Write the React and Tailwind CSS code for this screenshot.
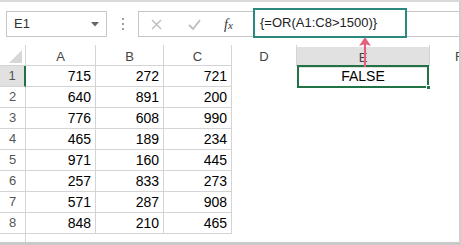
import React from "react";

const data = [
  [715, 272, 721],
  [640, 891, 200],
  [776, 608, 990],
  [465, 189, 234],
  [971, 160, 445],
  [257, 833, 273],
  [571, 287, 908],
  [848, 210, 465],
];

const font = { fontFamily: '"Liberation Sans", Arial, sans-serif' };

function HeaderRow() {
  return (
    <div className="flex h-[21px] shrink-0 text-[13px] text-[#444]">
      <div className="w-[26px] shrink-0 border-r border-b border-[#d4d4d4] flex items-end justify-end pr-[3px] pb-[2px]">
        <svg width="13" height="13" viewBox="0 0 13 13">
          <polygon points="13,0 13,13 0,13" fill="#d7d7d7" />
        </svg>
      </div>
      <div className="w-[70px] shrink-0 border-r border-b border-[#d4d4d4] flex items-center justify-center pt-[3px]">A</div>
      <div className="w-[68px] shrink-0 border-r border-b border-[#d4d4d4] flex items-center justify-center pt-[3px]">B</div>
      <div className="w-[68px] shrink-0 border-r border-b border-[#d4d4d4] flex items-center justify-center pt-[3px]">C</div>
      <div className="w-[65px] shrink-0 border-r border-[#d4d4d4] flex items-center justify-center pt-[3px]">D</div>
      <div className="w-[132px] shrink-0 flex flex-col pt-[2px]">
        <div className="flex-1 bg-[#e1e1e1] flex items-center justify-center pt-[1px]">E</div>
      </div>
      <div className="flex-1 border-l border-[#d4d4d4] flex items-center justify-start pl-[25px] pt-[3px] overflow-hidden">F</div>
    </div>
  );
}

function DataRow({ n, vals }) {
  const first = n === 1;
  return (
    <div className="flex h-[21px] shrink-0">
      <div
        className={
          "w-[26px] shrink-0 border-b border-[#d4d4d4] flex items-center justify-center text-[13px] text-[#555] " +
          (first ? "bg-[#e1e1e1] border-r-2 border-r-[#217346]" : "border-r")
        }
      >
        {n}
      </div>
      {vals.map((v, i) => (
        <div
          key={i}
          className={
            (i === 0 ? "w-[70px]" : "w-[68px]") +
            " shrink-0 border-r border-b border-[#d4d4d4] flex items-center justify-end pr-[4px] text-[14px] text-black"
          }
          style={font}
        >
          {v}
        </div>
      ))}
      <div className="w-[65px] shrink-0" />
      {first ? (
        <div className="relative w-[132px] shrink-0 border-2 border-[#217346] flex items-center justify-center text-[14px] text-black -mt-[1px] h-[23px]" style={font}>
          FALSE
          <div className="absolute -right-[4px] -bottom-[4px] w-[5px] h-[5px] bg-[#217346] border border-white" />
        </div>
      ) : null}
    </div>
  );
}

export default function App() {
  return (
    <div
      className="relative w-[461px] h-[245px] bg-white overflow-hidden flex flex-col border-t-2 border-[#d9d9d9] border-r-2 border-r-[#cfcfcf] border-b-[3px] border-b-[#c9c9c9]"
      style={font}
    >
      {/* toolbar */}
      <div className="flex items-start h-[43px] shrink-0 pt-[9px]">
        <div className="ml-[6px] w-[101px] h-[26px] border border-[#c6c6c6] flex items-center justify-between pl-[7px] pr-[7px] text-[13px] text-[#333]">
          <span>E1</span>
          <svg width="8" height="5" viewBox="0 0 8 5">
            <polygon points="0,0 8,0 4,4.5" fill="#666" />
          </svg>
        </div>
        <div className="w-[31px] h-[26px] flex flex-col items-center justify-center gap-[3px]">
          <div className="w-[2px] h-[2px] bg-[#a0a0a0]" />
          <div className="w-[2px] h-[2px] bg-[#a0a0a0]" />
          <div className="w-[2px] h-[2px] bg-[#a0a0a0]" />
        </div>
        <div className="flex-1 h-[26px] border border-[#c6c6c6] border-r-0 flex items-center">
          <svg className="ml-[12px]" width="11" height="11" viewBox="0 0 11 11">
            <path d="M1 1 L10 10 M10 1 L1 10" stroke="#bdbdbd" strokeWidth="1.4" />
          </svg>
          <svg className="ml-[26px]" width="13" height="11" viewBox="0 0 13 11">
            <path d="M1 6 L5 10 L12 1" stroke="#bdbdbd" strokeWidth="1.8" fill="none" />
          </svg>
          <span
            className="ml-[23px] text-[14px] italic text-[#333]"
            style={{ fontFamily: '"Liberation Serif", "Times New Roman", serif' }}
          >
            f<span className="text-[11px]">x</span>
          </span>
        </div>
      </div>

      {/* formula annotation box */}
      <div className="absolute left-[253px] top-[6px] w-[154px] h-[30px] border-2 border-[#2a8a7f] bg-white flex items-center pl-[5px] text-[13px] text-[#222]">
        {"{=OR(A1:C8>1500)}"}
      </div>

      {/* grid */}
      <HeaderRow />
      {data.map((vals, i) => (
        <DataRow key={i} n={i + 1} vals={vals} />
      ))}
      <div className="flex h-[21px] shrink-0">
        <div className="w-[26px] shrink-0 border-r border-[#d4d4d4] flex items-start justify-center pt-[4px] text-[13px] text-[#555]">9</div>
      </div>

      {/* arrow */}
      <svg className="absolute left-[358px] top-[35px]" width="14" height="30" viewBox="0 0 14 30">
        <path d="M7 30 L7 6" stroke="#e2637c" strokeWidth="2.2" />
        <polygon points="7,0 13,9 7,7 1,9" fill="#e2637c" />
      </svg>
    </div>
  );
}
